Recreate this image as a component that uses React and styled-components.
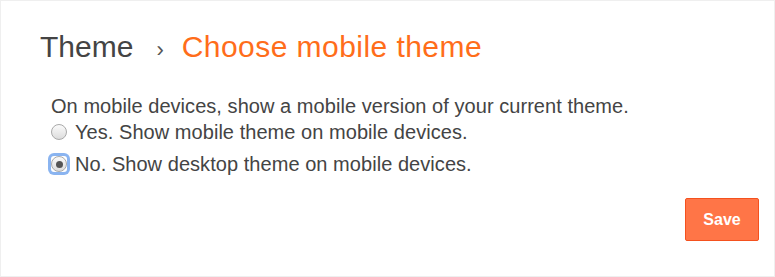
import React, { useState } from "react";
import styled, { createGlobalStyle } from "styled-components";

const GlobalStyle = createGlobalStyle`
  html, body {
    margin: 0;
    padding: 0;
    background: #ffffff;
  }
  body {
    font-family: Arial, "Liberation Sans", sans-serif;
    color: #444;
  }
`;

const Panel = styled.div`
  box-sizing: border-box;
  width: 775px;
  height: 277px;
  border: 1px solid #efefef;
  background: #fff;
  display: flex;
  flex-direction: column;
  padding: 26px 15px 0 39px;
`;

const Breadcrumb = styled.h1`
  margin: 0;
  display: flex;
  align-items: baseline;
  font-weight: normal;
  font-size: 30px;
  line-height: 40px;
`;

const Crumb = styled.span`
  color: ${(p) => (p.$current ? "#ff6d1a" : "#444")};
  letter-spacing: ${(p) => (p.$current ? "0.45px" : "0")};
`;

const Sep = styled.span`
  color: #555;
  font-size: 22px;
  margin: 0 18px 0 23px;
`;

const Body = styled.div`
  margin-top: 24px;
  padding-left: 11px;
  font-size: 20px;
  letter-spacing: 0.05px;
  color: #444;
`;

const Intro = styled.p`
  margin: 0 0 1px;
  line-height: 24px;
`;

const Option = styled.label`
  display: flex;
  align-items: center;
  gap: 8px;
  line-height: 26px;
  margin-bottom: 6px;
`;

const RadioRing = styled.span`
  display: flex;
  align-items: center;
  justify-content: center;
  width: 16px;
  height: 16px;
  flex-shrink: 0;
  border-radius: 3px;
  box-shadow: ${(p) => (p.$focus ? "0 0 0 3px #8ab4f0" : "none")};
`;

const Radio = styled.span`
  box-sizing: border-box;
  width: 16px;
  height: 16px;
  border-radius: 50%;
  border: 1px solid #a9a9a9;
  background: linear-gradient(#fbfbfb, #dcdcdc);
  display: flex;
  align-items: center;
  justify-content: center;
  &::after {
    content: "";
    width: 7px;
    height: 7px;
    border-radius: 50%;
    background: ${(p) => (p.$checked ? "#555" : "transparent")};
  }
`;

const Footer = styled.div`
  display: flex;
  justify-content: flex-end;
  margin-top: 15px;
`;

const SaveButton = styled.button`
  box-sizing: border-box;
  width: 74px;
  height: 43px;
  background: #ff7547;
  border: 1px solid #f4511e;
  border-radius: 2px;
  color: #fff;
  font-family: Arial, "Liberation Sans", sans-serif;
  font-weight: bold;
  font-size: 16px;
  cursor: pointer;
`;

export default function App() {
  const [choice, setChoice] = useState("no");
  return (
    <>
      <GlobalStyle />
      <Panel>
        <Breadcrumb>
          <Crumb>Theme</Crumb>
          <Sep>›</Sep>
          <Crumb $current>Choose mobile theme</Crumb>
        </Breadcrumb>
        <Body>
          <Intro>On mobile devices, show a mobile version of your current theme.</Intro>
          <Option onClick={() => setChoice("yes")}>
            <RadioRing>
              <Radio $checked={choice === "yes"} />
            </RadioRing>
            Yes. Show mobile theme on mobile devices.
          </Option>
          <Option onClick={() => setChoice("no")}>
            <RadioRing $focus={choice === "no"}>
              <Radio $checked={choice === "no"} />
            </RadioRing>
            No. Show desktop theme on mobile devices.
          </Option>
        </Body>
        <Footer>
          <SaveButton>Save</SaveButton>
        </Footer>
      </Panel>
    </>
  );
}
